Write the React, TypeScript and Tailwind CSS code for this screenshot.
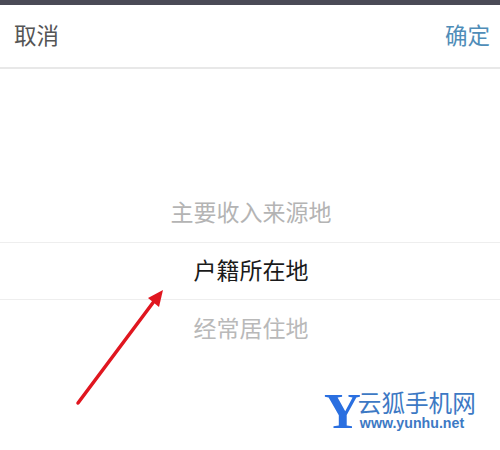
const cjk = "font-['Noto_Sans_CJK_SC','Noto_Sans',sans-serif]";

export default function App() {
  return (
    <div className={`relative h-[450px] w-[500px] overflow-hidden bg-white ${cjk}`}>
      {/* status strip */}
      <div className="h-[5px] bg-[#4a4a56]" />

      {/* toolbar */}
      <div className="flex h-[64px] items-center justify-between border-b-2 border-[#e8e8e8] pb-[3px] pl-[14px] pr-[10px] text-[22.5px] leading-none">
        <span className="text-[#555555]">取消</span>
        <span className="text-[#4f8db8]">确定</span>
      </div>

      {/* picker */}
      <div className="flex flex-col items-center pt-[115px] text-[23px] leading-none">
        <div className="flex h-[58px] w-full items-center justify-center pb-[4px] pl-[2px] text-[#b4b4b4]">主要收入来源地</div>
        <div className="flex h-[58px] w-full items-center justify-center border-y border-[#eeeeee] pb-[4px] pl-[2px] text-[#1a1a1a]">户籍所在地</div>
        <div className="flex h-[58px] w-full items-center justify-center pb-[4px] pl-[2px] text-[#b9b9b9]">经常居住地</div>
      </div>

      {/* red arrow */}
      <svg className="absolute left-[70px] top-[285px]" width="100" height="125" viewBox="0 0 100 125">
        <path d="M8 118 L85 15" stroke="#e0161f" strokeWidth="3.5" strokeLinecap="round" />
        <path d="M93 5 L78 13 L89 22 Z" fill="#e0161f" />
      </svg>

      {/* watermark */}
      <div className="absolute left-[324px] top-[387px] flex items-start">
        <span className="font-['Liberation_Serif',serif] text-[51px] font-bold leading-[48px] text-[#2a6fe0]">Y</span>
        <div className="ml-[-3px] flex flex-col pt-[3px]">
          <span className="text-[23.6px] leading-[24px] text-[#3d79c4]">云狐手机网</span>
          <span className="mt-[1px] pl-[2px] font-['Liberation_Sans',sans-serif] text-[14.2px] font-bold leading-[16px] text-[#3d79c4]">www.yunhu.net</span>
        </div>
      </div>
    </div>
  );
}
